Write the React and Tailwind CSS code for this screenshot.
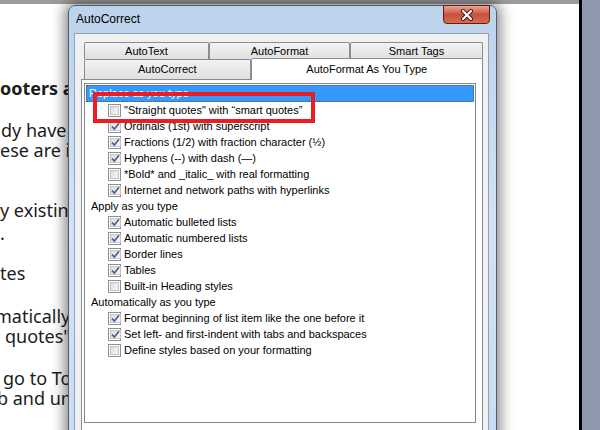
import React from 'react';

const replaceItems = [
    {label: '"Straight quotes" with \u201csmart quotes\u201d', checked: false},
    {label: 'Ordinals (1st) with superscript', checked: true},
    {label: 'Fractions (1/2) with fraction character (\u00bd)', checked: true},
    {label: 'Hyphens (--) with dash (\u2014)', checked: true},
    {label: '*Bold* and _italic_ with real formatting', checked: false},
    {label: 'Internet and network paths with hyperlinks', checked: true},
];

const applyItems = [
    {label: 'Automatic bulleted lists', checked: true},
    {label: 'Automatic numbered lists', checked: true},
    {label: 'Border lines', checked: true},
    {label: 'Tables', checked: true},
    {label: 'Built-in Heading styles', checked: false},
];

const autoItems = [
    {label: 'Format beginning of list item like the one before it', checked: true},
    {label: 'Set left- and first-indent with tabs and backspaces', checked: true},
    {label: 'Define styles based on your formatting', checked: false},
];

function CheckBox({checked}) {
    return (
        <span className="w-[13px] h-[13px] shrink-0 border border-[#8f8f8f] bg-white p-[1px] flex">
            <span className="flex-1 border border-[#c4c4c4] bg-gradient-to-br from-[#dedede] to-[#f8f8f8] flex items-center justify-center">
                {checked && (
                    <svg width="9" height="9" viewBox="0 0 9 9">
                        <path d="M1 4.6 L3.4 7 L8 1.3" fill="none" stroke="#4a5f8e" strokeWidth="1.7"/>
                    </svg>
                )}
            </span>
        </span>
    );
}

function Item({label, checked}) {
    return (
        <div className="h-[16px] flex items-center gap-[3px] pl-[22px] whitespace-nowrap">
            <CheckBox checked={checked}/>
            <span>{label}</span>
        </div>
    );
}

function Heading({children}) {
    return <div className="h-[16px] flex items-center pl-[5px] whitespace-nowrap">{children}</div>;
}

function BackTab({children, width}) {
    return (
        <div className={"h-full border border-b-0 border-[#898c95] rounded-t-[2px] bg-gradient-to-b from-[#f3f3f3] to-[#e0e0e0] flex items-center justify-center " + width}>
            {children}
        </div>
    );
}

function DocLine({children, className}) {
    return <div className={"h-[20px] leading-[20px] whitespace-nowrap " + className}>{children}</div>;
}

export default function App() {
    return (
        <div className="relative w-[600px] h-[430px] overflow-hidden bg-white flex font-['Noto_Sans',sans-serif]">
            <div className="w-[579px] h-full flex flex-col text-[18px] text-[#1c1c1c]">
                <div className="h-[4px] bg-[#9c9c9c]"/>
                <DocLine className="mt-[74px] font-bold">ooters and</DocLine>
                <DocLine className="mt-[22px] ml-[1px]">dy have</DocLine>
                <DocLine>ese are in</DocLine>
                <DocLine className="mt-[40px]">y existing</DocLine>
                <DocLine className="mt-[3px]">.</DocLine>
                <DocLine className="mt-[20px]">tes</DocLine>
                <DocLine className="mt-[23px] -ml-[5px]">matically</DocLine>
                <DocLine className="ml-[5px]">quotes"</DocLine>
                <DocLine className="mt-[22px] ml-[3px]">go to Tools</DocLine>
                <DocLine className="-ml-[3px]">b and un</DocLine>
            </div>
            <div className="w-[3px] h-full bg-black"/>
            <div className="flex-1 h-full bg-[#8f99ad]"/>

            {/* dialog window */}
            <div className="absolute left-[68px] top-[5px] w-[429px] h-[440px] rounded-t-[7px] border border-[#4b5d73] bg-gradient-to-b from-[#bcd3ec] via-[#d2e3f4] to-[#c9ddf2] shadow-[0_0_14px_3px_rgba(0,0,0,0.5)] flex flex-col font-['Liberation_Sans',sans-serif] text-[11px] text-black">
                <div className="h-[27px] shrink-0 flex items-center pl-[7px] relative">
                    <span className="-mt-[1px] text-[12px]">AutoCorrect</span>
                    <div className="absolute right-[6px] -top-[1px] w-[47px] h-[19px] rounded-b-[4px] border border-[#5c2019] bg-gradient-to-b from-[#e8a594] via-[#c9503f] to-[#d86b4e] flex items-center justify-center">
                        <svg width="14" height="12" viewBox="0 0 14 12">
                            <path d="M3 2 L11 10 M11 2 L3 10" stroke="#3b1a14" strokeWidth="4" strokeLinecap="round"/>
                            <path d="M3 2 L11 10 M11 2 L3 10" stroke="#ffffff" strokeWidth="2.2" strokeLinecap="round"/>
                        </svg>
                    </div>
                </div>
                <div className="flex-1 ml-[5px] mr-[7px] border-l border-t border-r border-[#8ea3bb] bg-[#f0f0f0] pl-[6px] pr-[5px] pt-[8px] flex flex-col">
                    <div className="pl-[3px] flex flex-col">
                        <div className="h-[17px] flex">
                            <BackTab width="w-[125px]">AutoText</BackTab>
                            <BackTab width="w-[141px]">AutoFormat</BackTab>
                            <BackTab width="w-[133px]">Smart Tags</BackTab>
                        </div>
                        <div className="h-[20px] flex items-end">
                            <BackTab width="w-[167px]">AutoCorrect</BackTab>
                            <div className="relative z-10 w-[233px] h-[22px] -mb-[1px] border border-b-0 border-[#898c95] rounded-t-[2px] bg-white flex items-center justify-center">
                                AutoFormat As You Type
                            </div>
                        </div>
                    </div>
                    <div className="flex-1 border border-[#898c95] bg-white pl-[2px] pr-[6px] pt-[3px]">
                        <div className="h-[340px] border border-[#828790] p-[1px]">
                            <div className="h-[17px] flex items-center pl-[2px] bg-[#3399ff] border border-dotted border-[#6b5532] text-white whitespace-nowrap">
                                Replace as you type
                            </div>
                            {replaceItems.map(it => <Item key={it.label} {...it}/>)}
                            <Heading>Apply as you type</Heading>
                            {applyItems.map(it => <Item key={it.label} {...it}/>)}
                            <Heading>Automatically as you type</Heading>
                            {autoItems.map(it => <Item key={it.label} {...it}/>)}
                        </div>
                    </div>
                </div>
            </div>

            {/* red annotation box */}
            <div className="absolute left-[93px] top-[92px] w-[222px] h-[31px] border-[4px] border-[#ec1c24]"/>
        </div>
    );
}
